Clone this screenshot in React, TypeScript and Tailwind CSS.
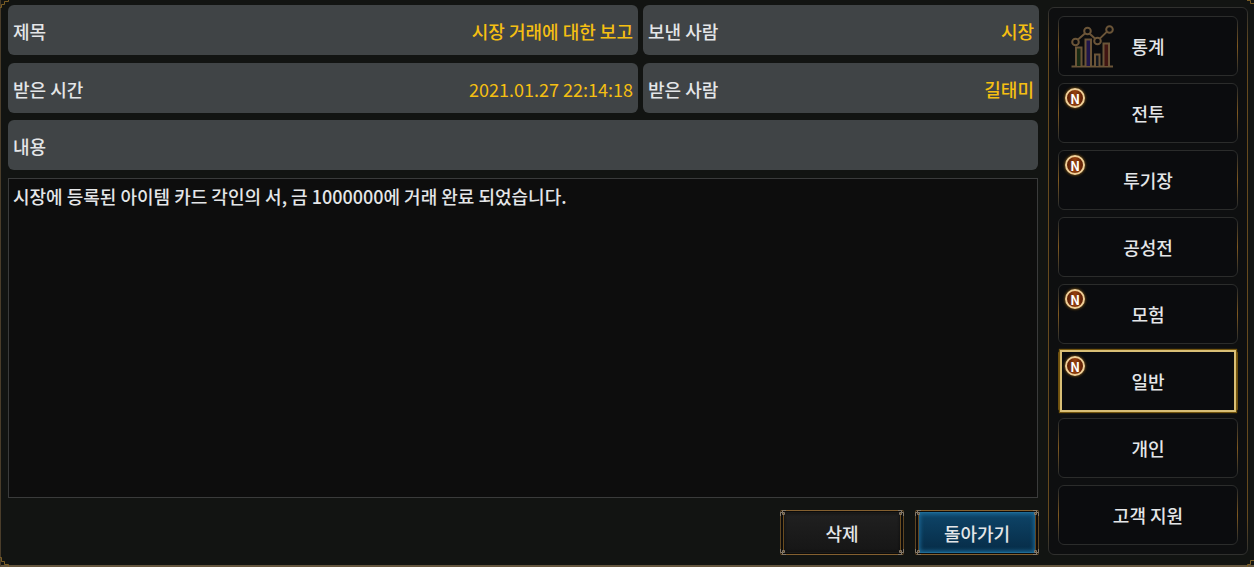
import { useState } from "react";
import clsx from "clsx";

type Tab = {
  id: string;
  label: string;
  isNew?: boolean;
  icon?: boolean;
};

const TABS: Tab[] = [
  { id: "stats", label: "통계", icon: true },
  { id: "battle", label: "전투", isNew: true },
  { id: "arena", label: "투기장", isNew: true },
  { id: "siege", label: "공성전" },
  { id: "adventure", label: "모험", isNew: true },
  { id: "general", label: "일반", isNew: true },
  { id: "personal", label: "개인" },
  { id: "support", label: "고객 지원" },
];

// grey frame whose sides turn gold towards the middle
const GOLD_SIDES =
  "before:pointer-events-none before:absolute before:inset-y-1 before:-left-px before:w-px before:bg-linear-to-b before:from-transparent before:via-[#80591f] before:to-transparent after:pointer-events-none after:absolute after:inset-y-1 after:-right-px after:w-px after:bg-linear-to-b after:from-transparent after:via-[#80591f] after:to-transparent";

function StatsIcon() {
  return (
    <svg viewBox="0 0 44 44" className="size-11" fill="none" stroke="#6b5538" strokeWidth="2">
      <path d="M0.500 41.500h41.500" strokeWidth="2.200" />
      <path d="M5 41V22.500h5.500V41" fill="#182a12" />
      <path d="M14.500 41V14.500h5.500V41" fill="#20164a" />
      <path d="M24 41V29.500h4.500V41" fill="#12161e" />
      <path d="M32.500 41V18.500h5.500V41" fill="#401512" />
      <path d="M6.700 14.700l7.500-6.500M18.500 8.500l6 5.500M28.800 13.600l7.200-7" />
      <circle cx="4.500" cy="17" r="3.300" />
      <circle cx="16.500" cy="6" r="3.300" />
      <circle cx="26.500" cy="16" r="3.300" />
      <circle cx="38.500" cy="4.500" r="3.300" />
    </svg>
  );
}

function NewBadge() {
  return (
    <span className="absolute left-1.5 top-1 flex size-5 items-center justify-center rounded-full border-2 border-[#f0cf96] bg-linear-to-r from-[#5a1d05] via-[#93400f] to-[#5a1d05] font-['Noto_Sans_CJK_KR',sans-serif] text-[13px] font-bold leading-none text-white shadow-[0_0_3px_#a86f16]">
      N
    </span>
  );
}

function FrameCorner({ d, className }: { d: string; className: string }) {
  return (
    <svg viewBox="0 0 10 10" className={clsx("pointer-events-none absolute size-2.5", className)} fill="none" stroke="#7a5d24">
      <path d={d} />
    </svg>
  );
}

function ButtonCorner({ className }: { className: string }) {
  return (
    <svg viewBox="0 0 6 6" className={clsx("pointer-events-none absolute size-1.5", className)} fill="none" stroke="#84796a">
      <path d="M0.500 6V2.500H2.500V0.500H6M2.500 2.500H4.500V4.500H2.500z" />
    </svg>
  );
}

function Field({ label, value, numeric }: { label: string; value: string; numeric?: boolean }) {
  return (
    <div className="flex h-[50px] items-center justify-between rounded-md bg-[#404446] px-[5px] pt-0.5">
      <dt>{label}</dt>
      <dd className={clsx("text-[#f5bf12]", numeric && "font-normal")}>{value}</dd>
    </div>
  );
}

function FrameButton({ label, primary }: { label: string; primary?: boolean }) {
  return (
    <button
      type="button"
      className="relative h-[45px] w-[124px] rounded-xs border border-[#5f4623] border-y-[#846030] bg-[#0c0b0a] px-[2px] py-px"
    >
      <span
        className={clsx(
          "flex h-full items-center justify-center border",
          primary
            ? "border-[#1f6b95] border-x-[#5f4623] bg-linear-to-b from-[#0e4468] via-[#0a3857] to-[#072c47] shadow-[inset_0_0_4px_1px_#1d6f9e]"
            : "border-[#1a1a19] border-x-[#6b4d20] bg-linear-to-b from-[#202020] to-[#161616] shadow-[inset_0_0_3px_#0c0c0c]",
        )}
      >
        {label}
      </span>
      <ButtonCorner className="-left-px -top-px" />
      <ButtonCorner className="-right-px -top-px -scale-x-100" />
      <ButtonCorner className="-bottom-px -left-px -scale-y-100" />
      <ButtonCorner className="-bottom-px -right-px -scale-100" />
    </button>
  );
}

function TabButton({ tab, active, onSelect }: { tab: Tab; active: boolean; onSelect: () => void }) {
  return (
    <button
      type="button"
      aria-pressed={active}
      onClick={onSelect}
      className={clsx(
        "relative flex h-[60px] w-full items-center justify-center border bg-[#0b0c0e]",
        active ? "rounded-xs border-[#6b4f12]" : "rounded-md border-[#2b2c2b]",
        !active && GOLD_SIDES,
      )}
    >
      {active && (
        <span className="pointer-events-none absolute inset-x-px -inset-y-0.5 border-2 border-[#d9bf76] shadow-[0_0_1px_1px_#74560f]" />
      )}
      {tab.icon && (
        <span className="absolute left-3 top-2">
          <StatsIcon />
        </span>
      )}
      {tab.isNew && <NewBadge />}
      {tab.label}
    </button>
  );
}

export default function App() {
  const [active, setActive] = useState("general");

  return (
    <div className="relative flex min-h-screen gap-[9px] border-b-2 border-l border-b-[#65563e] border-l-[#4a3d2a] bg-[#121412] pl-[7px] pr-1.5 font-['Noto_Sans_CJK_KR',sans-serif] text-lg font-medium leading-[26px] text-[#e4e6e8]">
      {/* Report */}
      <main className="flex grow flex-col pb-2.5 pt-[5px]">
        <dl className="grid grid-cols-[630fr_396fr] gap-x-[5px] gap-y-2">
          <Field label="제목" value="시장 거래에 대한 보고" />
          <Field label="보낸 사람" value="시장" />
          <Field label="받은 시간" value="2021.01.27 22:14:18" numeric />
          <Field label="받은 사람" value="길태미" />
        </dl>
        <section className="mr-px mt-[7px] flex grow flex-col gap-2">
          <h2 className="flex h-[50px] items-center rounded-md bg-[#404446] px-[5px] pt-0.5">내용</h2>
          <p className="grow border border-[#3a3b3b] bg-[#0d0d0d] p-1">
            시장에 등록된 아이템 카드 각인의 서, 금 1000000에 거래 완료 되었습니다.
          </p>
        </section>
        <div className="mt-3 flex justify-end gap-[11px]">
          <FrameButton label="삭제" />
          <FrameButton label="돌아가기" primary />
        </div>
      </main>

      {/* Categories */}
      <nav
        className={clsx(
          "relative mb-2.5 mt-[7px] flex w-[200px] shrink-0 flex-col gap-[7px] rounded-md border border-[#30302e] bg-[#0e0f10] px-[9px] py-2",
          "before:absolute before:inset-y-1 before:-left-px before:w-px before:bg-[linear-gradient(transparent,#664a1e_6%,#664a1e_94%,transparent)]",
          "after:absolute after:inset-y-1 after:-right-px after:w-px after:bg-[linear-gradient(transparent,#664a1e_6%,#664a1e_94%,transparent)]",
        )}
      >
        {TABS.map((tab) => (
          <TabButton key={tab.id} tab={tab} active={tab.id === active} onSelect={() => setActive(tab.id)} />
        ))}
      </nav>

      <FrameCorner className="-left-px top-0" d="M0 7.500H1.500V4.500H4.500V1.500H8.500V0" />
      <FrameCorner className="right-0 top-0" d="M3 0.500H6.500V3.500H10" />
      <FrameCorner className="-bottom-0.5 -left-px" d="M0 0.500H1.500V4.500H4.500V7.500H8.500V10" />
      <FrameCorner className="-bottom-0.5 right-0" d="M3.500 10V7.500H6.500V3.500H10" />
    </div>
  );
}
